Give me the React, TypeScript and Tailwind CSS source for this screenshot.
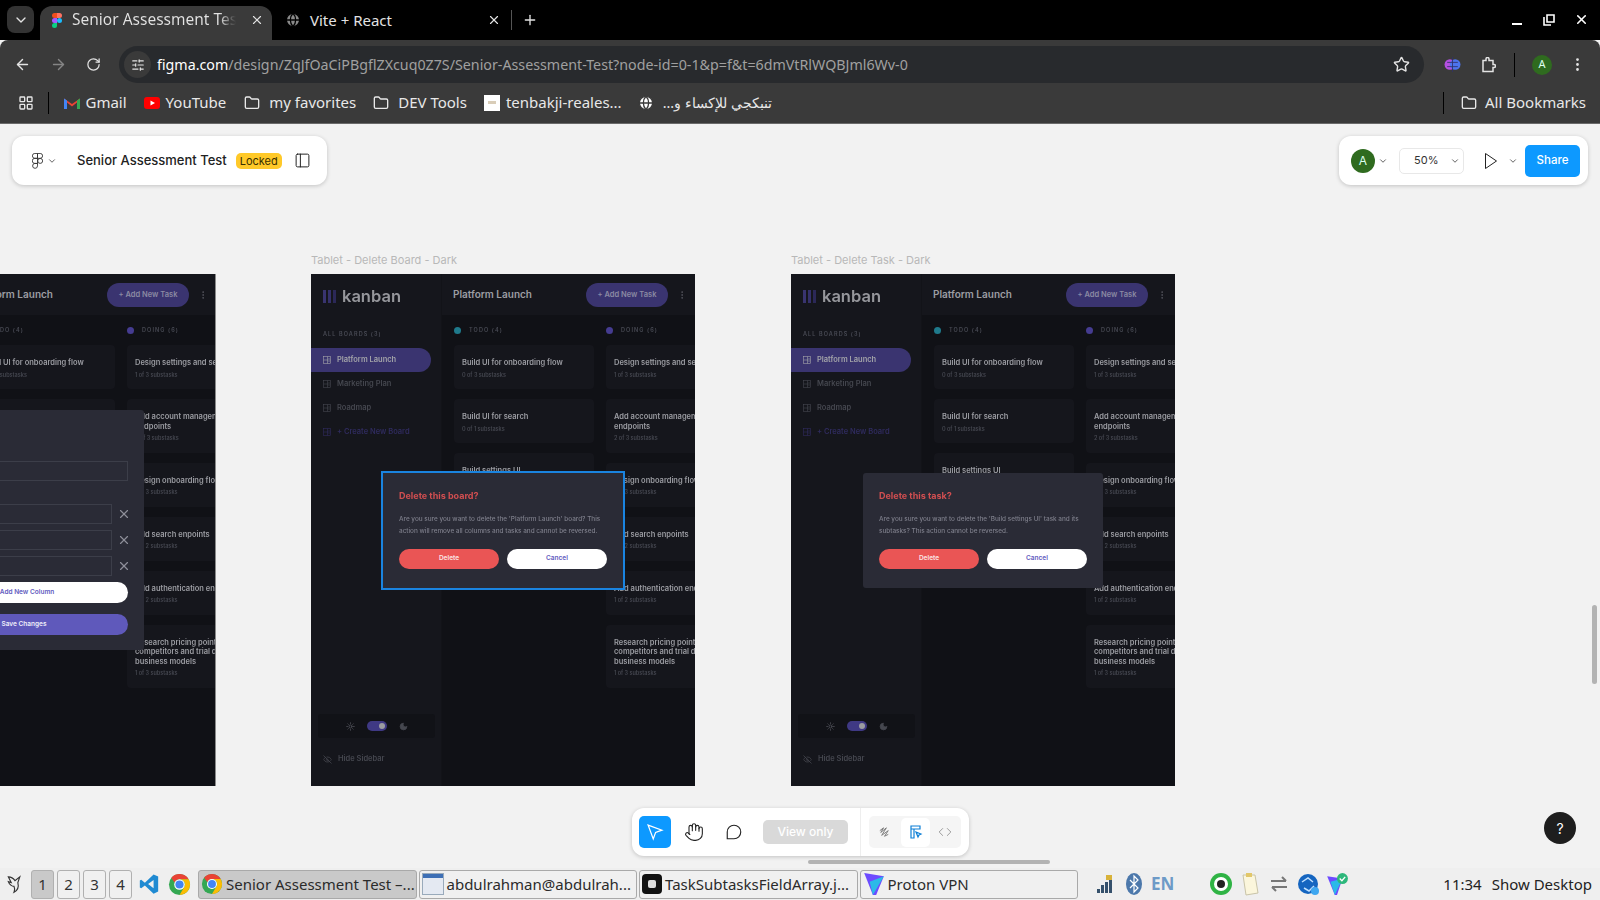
import {
  ArrowLeft,
  ArrowRight,
  ChevronDown,
  Code,
  EllipsisVertical,
  EyeOff,
  Folder,
  Globe,
  Hand,
  LayoutGrid,
  Moon,
  PanelLeft,
  Plus,
  RotateCw,
  SlidersHorizontal,
  Star,
  Sun,
  X,
} from 'lucide-react';

const todoCards = [
  { title: 'Build UI for onboarding flow', sub: '0 of 3 substasks' },
  { title: 'Build UI for search', sub: '0 of 1 substasks' },
  { title: 'Build settings UI', sub: '0 of 2 substasks' },
  { title: 'QA and test all major\nuser journeys', sub: '0 of 2 substasks' },
];

const doingCards = [
  { title: 'Design settings and search pages', sub: '1 of 3 substasks' },
  { title: 'Add account management\nendpoints', sub: '2 of 3 substasks' },
  { title: 'Design onboarding flow', sub: '1 of 3 substasks' },
  { title: 'Add search enpoints', sub: '1 of 2 substasks' },
  { title: 'Add authentication endpoints', sub: '1 of 2 substasks' },
  { title: 'Research pricing points of\ncompetitors and trial different\nbusiness models', sub: '1 of 3 substasks' },
];

function BoardIcon({ className }: { className?: string }) {
  return (
    <svg viewBox="0 0 16 16" fill="none" stroke="currentColor" strokeWidth="1.2" className={className}>
      <rect x="1" y="1" width="14" height="14" />
      <path d="M1 8h14M9 1v14M11 5h2M11 11h2" />
    </svg>
  );
}

function TaskCard({ title, sub }: { title: string; sub: string }) {
  return (
    <div className="w-[140px] shrink-0 rounded-[4px] bg-[#15161c] pl-2 pt-[13px] pb-[10.5px]">
      <p className="whitespace-pre text-[7.5px] leading-[9.5px] font-semibold text-[#9c9da3]">{title}</p>
      <p className="mt-[3px] whitespace-nowrap text-[5.5px] leading-[8px] font-semibold text-[#44464f]">{sub}</p>
    </div>
  );
}

function Column({ dot, label, cards }: { dot: string; label: string; cards: { title: string; sub: string }[] }) {
  return (
    <div className="flex w-[140px] shrink-0 flex-col gap-[10px]">
      <div className="-mb-[10px] flex h-[30px] items-center gap-2">
        <span className={`size-[7px] rounded-full ${dot}`} />
        <span className="text-[5.5px] font-semibold tracking-[0.2em] text-[#494b55]">{label}</span>
      </div>
      {cards.map((c) => (
        <TaskCard key={c.title} title={c.title} sub={c.sub} />
      ))}
    </div>
  );
}

function KanbanFrame({ className, children }: { className: string; children?: React.ReactNode }) {
  return (
    <div className={`absolute top-[150px] flex h-[512px] w-[384px] overflow-hidden bg-[#101116] font-['Inter',sans-serif] ${className}`}>
      <aside className="flex w-[131px] shrink-0 flex-col border-r border-[#121318] bg-[#15161c] blur-[0.25px]">
        <div className="mt-[9px] flex h-[26px] items-center gap-[6px] pl-3">
          <div className="flex gap-[2px]">
            <span className="h-[13px] w-[3px] bg-[#393470]" />
            <span className="h-[13px] w-[3px] bg-[#34306a]" />
            <span className="h-[13px] w-[3px] bg-[#2b2858]" />
          </div>
          <span className="text-[16.5px] font-semibold text-[#96979c]">kanban</span>
        </div>
        <p className="mt-[21px] pl-3 text-[5.5px] leading-[8px] font-semibold tracking-[0.2em] text-[#494b55]">ALL BOARDS (3)</p>
        <div className="mt-[10px] flex flex-col">
          <div className="flex h-6 w-[120px] items-center gap-[6px] rounded-r-full bg-[#3a3470] pl-3 text-[7.5px] font-semibold text-[#a3a4a9]">
            <BoardIcon className="size-2" />
            Platform Launch
          </div>
          <div className="flex h-6 items-center gap-[6px] pl-3 text-[7.5px] font-semibold text-[#45474f]">
            <BoardIcon className="size-2" />
            Marketing Plan
          </div>
          <div className="flex h-6 items-center gap-[6px] pl-3 text-[7.5px] font-semibold text-[#45474f]">
            <BoardIcon className="size-2" />
            Roadmap
          </div>
          <div className="flex h-6 items-center gap-[6px] pl-3 text-[7.5px] font-semibold text-[#2f2b5e]">
            <BoardIcon className="size-2" />
            + Create New Board
          </div>
        </div>
        <div className="mt-auto ml-[7px] flex h-6 w-[117px] items-center justify-center gap-3 rounded-[3px] bg-[#111217]">
          <Sun className="size-[9px] text-[#55575f]" />
          <span className="flex h-[10px] w-5 items-center justify-end rounded-full bg-[#3f3984] pr-[2px]">
            <span className="size-[6px] rounded-full bg-[#9b9ca1]" />
          </span>
          <Moon className="size-[9px] fill-[#45474f] text-[#45474f]" />
        </div>
        <div className="mt-[15px] mb-[21px] flex h-[12px] items-center gap-[6px] pl-3 text-[7.5px] font-semibold text-[#45474f]">
          <EyeOff className="size-[9px]" />
          Hide Sidebar
        </div>
      </aside>
      <div className="flex min-w-0 flex-1 flex-col blur-[0.25px]">
        <header className="flex h-[41px] shrink-0 items-center bg-[#15161c] pl-[11px]">
          <span className="w-[133px] text-[10px] font-semibold text-[#9c9da3]">Platform Launch</span>
          <span className="flex h-6 w-[82px] items-center justify-center rounded-full bg-[#3a3470] text-[7.5px] font-semibold text-[#8b8aa3]">+ Add New Task</span>
          <EllipsisVertical className="ml-[9px] size-[10px] text-[#55575f]" />
        </header>
        <div className="flex gap-3 pl-3">
          <Column dot="bg-[#1f7a8c]" label="TODO (4)" cards={todoCards} />
          <Column dot="bg-[#453c91]" label="DOING (6)" cards={doingCards} />
        </div>
      </div>
      {children}
    </div>
  );
}

function DeleteDialog({ title, lines, selected }: { title: string; lines: string[]; selected?: boolean }) {
  return (
    <div className={`absolute left-[72px] top-[199px] w-[240px] rounded-[3px] bg-[#2a2b36] p-4 pb-[19px] ${selected ? 'rounded-none outline-2 outline-[#1a84e0]' : ''}`}>
      <div className="blur-[0.2px]">
        <p className="text-[9px] leading-[14px] font-bold text-[#d04e50]">{title}</p>
        <div className="mt-[11px] text-[6.4px] leading-[11.5px] font-medium text-[#7e7f8b]">
          {lines.map((l) => (
            <p key={l} className="whitespace-nowrap">{l}</p>
          ))}
        </div>
      </div>
      <div className="mt-[12px] flex gap-2">
        <button className="h-5 w-[100px] rounded-full bg-[#ea5555] text-[6.5px] font-semibold text-[#fbe5e5]">Delete</button>
        <button className="h-5 w-[100px] rounded-full bg-white text-[6.5px] font-semibold text-[#5f5bc0]">Cancel</button>
      </div>
    </div>
  );
}

function EditBoardDialog() {
  return (
    <div className="absolute left-[72px] top-[136px] h-[240px] w-[240px] rounded-[3px] bg-[#2a2b36]">
      <div className="absolute left-4 top-[51px] h-5 w-[208px] border border-[#3c3e49]" />
      {[94, 120, 146].map((t) => (
        <div key={t} className="absolute left-4 flex items-center gap-[5px]" style={{ top: t }}>
          <div className="h-5 w-[192px] border border-[#3c3e49]" />
          <X className="size-[14px] text-[#8d8e99]" strokeWidth={2} />
        </div>
      ))}
      <div className="absolute left-4 top-[172px] flex h-[21px] w-[208px] items-center justify-center rounded-full bg-white text-[6.5px] font-semibold text-[#5f5bc0]">+ Add New Column</div>
      <div className="absolute left-4 top-[204px] flex h-[21px] w-[208px] items-center justify-center rounded-full bg-[#5f59bb] text-[6.5px] font-semibold text-[#eeeefa]">Save Changes</div>
    </div>
  );
}

function ChromeLogo({ className }: { className?: string }) {
  return (
    <svg viewBox="0 0 24 24" className={className}>
      <circle cx="12" cy="12" r="11" fill="#34a853" />
      <path d="M3.4 5.1A11 11 0 0 1 21.5 6.5H12a5.5 5.5 0 0 0-5 3.5z" fill="#ea4335" />
      <path d="M21.5 6.5A11 11 0 0 1 12 23l4.8-8.2A5.5 5.5 0 0 0 12 6.5z" fill="#fbbc04" />
      <circle cx="12" cy="12" r="5.5" fill="#fff" />
      <circle cx="12" cy="12" r="4.3" fill="#4285f4" />
    </svg>
  );
}

function FigmaLogo({ className }: { className?: string }) {
  return (
    <svg viewBox="0 0 12 18" className={className}>
      <path d="M3 18a3 3 0 0 0 3-3v-3H3a3 3 0 0 0 0 6z" fill="#0acf83" />
      <path d="M0 9a3 3 0 0 1 3-3h3v6H3a3 3 0 0 1-3-3z" fill="#a259ff" />
      <path d="M0 3a3 3 0 0 1 3-3h3v6H3a3 3 0 0 1-3-3z" fill="#f24e1e" />
      <path d="M6 0h3a3 3 0 0 1 0 6H6z" fill="#ff7262" />
      <circle cx="9" cy="9" r="3" fill="#1abcfe" />
    </svg>
  );
}

function FigmaOutline({ className }: { className?: string }) {
  return (
    <svg viewBox="0 0 12 18" fill="none" stroke="currentColor" strokeWidth="1" className={className}>
      <path d="M6 .5H3a2.75 2.75 0 0 0 0 5.5h3zM6 .5h3A2.75 2.75 0 0 1 9 6H6zM6 6H3a2.75 2.75 0 0 0 0 5.75h3zM6 11.75H3a2.75 2.75 0 1 0 3 2.75z" />
      <circle cx="9" cy="8.9" r="2.8" />
    </svg>
  );
}

function TaskButton({ icon, label, active }: { icon: React.ReactNode; label: string; active?: boolean }) {
  return (
    <div className={`flex h-[29px] w-[218.5px] shrink-0 items-center gap-[3px] overflow-hidden rounded-[3px] border border-[#a9a9a9] pl-[2px] whitespace-nowrap ${active ? 'bg-[#c9c9c9]' : 'bg-[#f0f0f0]'}`}>
      {icon}
      <span className="text-[15px] text-[#2b2b2b]">{label}</span>
    </div>
  );
}

function Pager({ n, active }: { n: number; active?: boolean }) {
  return (
    <div className={`flex h-[29px] w-[23px] items-center justify-center rounded-[3px] border border-[#b0b0b0] text-[15px] text-[#333] ${active ? 'bg-[#c9c9c9]' : 'bg-[#f0f0f0]'}`}>{n}</div>
  );
}

export default function App() {
  return (
    <div className="flex h-[900px] w-[1600px] flex-col overflow-hidden bg-[#f2f2f2] font-['Noto_Sans',sans-serif]">
      {/* Tab strip */}
      <div className="flex h-10 shrink-0 items-end bg-black text-[#e3e3e3]">
        <div className="mb-[7px] ml-[7px] flex h-[27px] w-[27px] items-center justify-center rounded-lg bg-[#333]">
          <ChevronDown className="size-4" />
        </div>
        <div className="ml-[6px] flex h-[34px] w-[232px] items-center rounded-t-xl bg-[#3a3a3a] pb-[6px] pl-3">
          <FigmaLogo className="h-[15px] w-[10px]" />
          <span className="ml-[10px] w-[164px] overflow-hidden bg-linear-to-r from-[#e3e3e3] from-90% to-[#3a3a3a] bg-clip-text text-[15.5px] whitespace-nowrap text-transparent">Senior Assessment Test</span>
          <X className="ml-[14px] size-[14px]" />
        </div>
        <div className="flex h-[34px] items-center pb-[6px] pl-[13px]">
          <Globe className="size-[16px] fill-[#8a8a8a] text-black" />
          <span className="ml-[9px] w-[177px] text-[15px]">Vite + React</span>
          <X className="size-[14px]" />
          <span className="ml-[10px] h-[20px] w-px bg-[#555]" />
          <Plus className="ml-[10px] size-4" />
        </div>
        <div className="mb-[13px] ml-auto flex items-center pr-[11px] text-white">
          <span className="mt-2 h-[2px] w-[10px] bg-white" />
          <svg viewBox="0 0 12 12" fill="none" stroke="currentColor" strokeWidth="1.6" className="ml-[21px] size-3">
            <path d="M1 3v8h7M4 1h7v7H4z" />
          </svg>
          <X className="ml-[19px] size-[15px]" strokeWidth={2.5} />
        </div>
      </div>

      {/* Address bar */}
      <div className="flex h-[43px] shrink-0 items-center rounded-t-lg bg-[#3a3a3a] pt-[6px] pl-[14px] text-[#e3e3e3]">
        <ArrowLeft className="size-[17px]" />
        <ArrowRight className="ml-[19px] size-[17px] text-[#858585]" />
        <RotateCw className="ml-[19px] size-[15px]" />
        <div className="ml-[18px] flex h-[37px] w-[1305px] items-center rounded-full bg-[#282a2d] pl-[5px] text-[14.25px]">
          <span className="flex size-[27px] items-center justify-center rounded-full bg-[#3a3a3a]">
            <SlidersHorizontal className="size-[14px]" />
          </span>
          <span className="ml-[6px] text-white">figma.com</span>
          <span className="text-[#a0a0a0]">/design/ZqJfOaCiPBgflZXcuq0Z7S/Senior-Assessment-Test?node-id=0-1&amp;p=f&amp;t=6dmVtRlWQBJml6Wv-0</span>
          <Star className="ml-auto mr-[14px] size-[17px]" />
        </div>
        <svg viewBox="0 0 16 16" className="ml-[20px] size-[17px]">
          <circle cx="5.5" cy="8" r="5" fill="#b44fe0" />
          <circle cx="10.5" cy="8" r="5" fill="#4d74ee" />
          <path d="M8 1v14M3 6h10M3 10h10" stroke="#2f2f6a" strokeWidth="0.8" />
        </svg>
        <svg viewBox="0 0 16 16" fill="none" stroke="currentColor" strokeWidth="1.5" className="ml-[19px] size-[16px]">
          <path d="M3 3.5h3V2a1.5 1.5 0 0 1 3 0v1.5h4v4h1a1 1 0 0 1 0 3h-1v4H3z" />
        </svg>
        <span className="ml-[18px] h-[24px] w-px bg-black" />
        <span className="ml-[17px] flex size-5 items-center justify-center rounded-full bg-[#2f6b1f] text-[11px] text-[#dfe]">A</span>
        <EllipsisVertical className="ml-[17px] size-[17px]" />
      </div>

      {/* Bookmarks */}
      <div className="flex h-[41px] shrink-0 items-center border-b border-[#6a6a6a] bg-[#3a3a3a] pb-[1px] text-[15px] text-[#e8e8e8]">
        <LayoutGrid className="ml-[18px] size-[16px]" />
        <span className="ml-[14px] h-[22px] w-px bg-black" />
        <svg viewBox="0 0 16 12" className="ml-[14.5px] h-3 w-4">
          <path d="M0 12V1.5L8 7l8-5.5V12h-3V5.5L8 9.5 3 5.5V12z" fill="#ea4335" />
          <path d="M0 12V1.5l3 2V12z" fill="#4285f4" />
          <path d="M13 12V3.5l3-2V12z" fill="#34a853" />
        </svg>
        <span className="ml-[6px]">Gmail</span>
        <svg viewBox="0 0 16 12" className="ml-[17px] h-3 w-4">
          <rect width="16" height="12" rx="3" fill="#f00" />
          <path d="M6.5 3.5v5L11 6z" fill="#fff" />
        </svg>
        <span className="ml-[6px]">YouTube</span>
        <Folder className="ml-[18px] size-4" />
        <span className="ml-[9px]">my favorites</span>
        <Folder className="ml-[17px] size-4" />
        <span className="ml-[9px]">DEV Tools</span>
        <span className="ml-[17px] flex size-4 items-center justify-center bg-white">
          <span className="h-[3px] w-2 bg-[#d9cdb8]" />
        </span>
        <span className="ml-[6px]">tenbakji-reales...</span>
        <Globe className="ml-[16px] size-4 fill-white text-[#3a3a3a]" />
        <span dir="rtl" className="ml-[9px] text-[14.3px]">تنبكجي للإكساء و...</span>
        <span className="ml-auto h-[22px] w-px bg-black" />
        <Folder className="ml-[17px] size-4" />
        <span className="ml-[8px] mr-[14px]">All Bookmarks</span>
      </div>

      {/* Figma canvas */}
      <main className="relative flex-1 bg-[#f2f2f2] font-['Inter',sans-serif]">
        <KanbanFrame className="left-[-168px] border-r border-[#8a8a8a]">
          <EditBoardDialog />
        </KanbanFrame>

        <p className="absolute left-[311px] top-[129px] text-[11px] leading-[14px] text-[#b8b8b8]">Tablet - Delete Board - Dark</p>
        <KanbanFrame className="left-[311px]">
          <DeleteDialog
            selected
            title="Delete this board?"
            lines={["Are you sure you want to delete the 'Platform Launch' board? This", 'action will remove all columns and tasks and cannot be reversed.']}
          />
        </KanbanFrame>

        <p className="absolute left-[791px] top-[129px] text-[11px] leading-[14px] text-[#b8b8b8]">Tablet - Delete Task - Dark</p>
        <KanbanFrame className="left-[791px]">
          <DeleteDialog
            title="Delete this task?"
            lines={["Are you sure you want to delete the 'Build settings UI' task and its", 'subtasks? This action cannot be reversed.']}
          />
        </KanbanFrame>

        {/* File panel */}
        <div className="absolute left-3 top-3 flex h-[49px] w-[315px] items-center rounded-xl bg-white pl-[20px] shadow-[0_1px_4px_rgba(0,0,0,0.2)]">
          <FigmaOutline className="h-4 w-[11px] text-[#333]" />
          <ChevronDown className="ml-[4px] size-[10px] text-[#444]" />
          <span className="ml-[20px] text-[13px] font-medium text-[#222]">Senior Assessment Test</span>
          <span className="ml-[9px] rounded-[5px] bg-[#ffc929] px-[4px] text-[11px] leading-[16px] text-[#3a3000]">Locked</span>
          <PanelLeft className="ml-[12px] size-[17px] text-[#222]" strokeWidth={1.4} />
        </div>

        {/* Share panel */}
        <div className="absolute right-3 top-3 flex h-[49px] w-[249px] items-center rounded-xl bg-white pl-3 shadow-[0_1px_4px_rgba(0,0,0,0.2)]">
          <span className="flex size-6 items-center justify-center rounded-full bg-[#2f6b1f] text-[12px] text-[#dfe]">A</span>
          <ChevronDown className="ml-[3px] size-[10px] text-[#444]" />
          <div className="ml-[11px] flex h-[26px] w-[65px] items-center justify-between rounded-[5px] border border-[#e8e8e8] pl-[14px] pr-[3px] text-[11px] text-[#333]">
            50%
            <ChevronDown className="size-[10px] text-[#444]" />
          </div>
          <svg viewBox="0 0 14 18" fill="none" stroke="#222" strokeWidth="1" className="ml-[20px] h-[18px] w-[14px]">
            <path d="M1.5 1.5l11 7.5-11 7.5z" strokeLinejoin="round" />
          </svg>
          <ChevronDown className="ml-[10px] size-[10px] text-[#444]" />
          <div className="ml-[7px] flex h-8 w-[55px] items-center justify-center rounded-[5px] bg-[#0d99ff] text-[11.5px] font-medium text-white">Share</div>
        </div>

        {/* Bottom tools */}
        <div className="absolute left-[632px] top-[684px] flex h-12 w-[337px] items-center rounded-xl bg-white pl-[7px] shadow-[0_1px_4px_rgba(0,0,0,0.2)]">
          <span className="flex size-8 items-center justify-center rounded-[5px] bg-[#0d99ff]">
            <svg viewBox="0 0 16 16" fill="none" stroke="white" strokeWidth="1" className="size-5">
              <path d="M2.5 2.5l11 4-5 1.8L6.6 13.5z" />
            </svg>
          </span>
          <Hand className="ml-[13px] size-[20px] text-[#222]" strokeWidth={1.3} />
          <svg viewBox="0 0 16 16" fill="none" stroke="#222" strokeWidth="1" className="ml-[21px] size-[18px]">
            <path d="M8 2a6 6 0 0 1 0 12H2V8a6 6 0 0 1 6-6z" />
          </svg>
          <span className="ml-[20px] flex h-6 w-[85px] items-center justify-center rounded-[5px] bg-[#d9d9d9] text-[12px] font-medium text-white">View only</span>
          <span className="ml-3 h-12 w-px bg-[#eee]" />
          <div className="ml-2 flex h-8 w-[92px] items-center rounded-[5px] bg-[#f5f5f5] pl-2">
            <svg viewBox="0 0 16 16" fill="none" stroke="#777" strokeWidth="1" className="size-[15px]">
              <path d="M3 6l4-3-3 5 6-5-5 8 7-5-4 6 4-2" />
            </svg>
            <span className="ml-[9px] flex size-[29px] items-center justify-center rounded-[5px] bg-white">
              <svg viewBox="0 0 16 16" fill="none" stroke="#0d7fd6" strokeWidth="1.2" className="size-[16px]">
                <path d="M3 2h9v3H6v9H3zM3 5h3M8 8l5 2-2 1-1 2z" />
              </svg>
            </span>
            <Code className="ml-[8px] size-[14px] text-[#777]" strokeWidth={1.2} />
          </div>
        </div>

        <div className="absolute left-[1544px] top-[688px] flex size-8 items-center justify-center rounded-full bg-[#1e1e1e] text-[14px] text-white">?</div>
        <div className="absolute left-[808px] top-[736px] h-1 w-[242px] rounded-full bg-[#b3b3b3]" />
        <div className="absolute left-[1592px] top-[481px] h-[79px] w-[5px] rounded-full bg-[#b3b3b3]" />
      </main>

      {/* Desktop panel */}
      <footer className="flex h-8 shrink-0 items-center gap-[3px] bg-[#efefef] pl-[5px]">
        <svg viewBox="0 0 20 22" fill="none" stroke="#333" strokeWidth="1.2" className="mr-[3px] h-[21px] w-[20px]">
          <path d="M3 3c3 0 5 1 7 4l5-4-2 6c1 4 0 8-4 10 1-2 1-4 0-6-2 0-5-2-6-5l3 1C5 7 4 5 3 3z" />
        </svg>
        <Pager n={1} active />
        <Pager n={2} />
        <Pager n={3} />
        <Pager n={4} />
        <svg viewBox="0 0 24 24" className="ml-[3px] size-[22px]">
          <path d="M17 1.5l5 2.4v16.2l-5 2.4L7.5 13.5 3.5 16.6 2 15.8V8.2l1.5-.8 4 3.1zM17 7.5L11 12l6 4.5z" fill="#1f8ad2" />
        </svg>
        <ChromeLogo className="ml-[5px] size-[23px]" />
        <div className="ml-[4px] flex gap-[2px]">
          <TaskButton active icon={<ChromeLogo className="size-[22px] shrink-0" />} label="Senior Assessment Test –..." />
          <TaskButton
            icon={
              <span className="flex h-[22px] w-[22px] shrink-0 flex-col border border-[#9ab]">
                <span className="h-1 bg-[#3d6fb5]" />
                <span className="flex-1 bg-[#e4e9f2]" />
              </span>
            }
            label="abdulrahman@abdulrah..."
          />
          <TaskButton
            icon={
              <span className="flex size-[20px] shrink-0 items-center justify-center rounded-[4px] bg-[#111]">
                <span className="size-2 rounded-[2px] bg-[#ddd]" />
              </span>
            }
            label="TaskSubtasksFieldArray.j..."
          />
          <TaskButton
            icon={
              <svg viewBox="0 0 20 22" className="h-[24px] w-[22px] shrink-0">
                <path d="M1 1l18 3-7 17h-3z" fill="#6d4aff" />
                <path d="M9 21L19 4 6 9z" fill="#2bb9e8" />
              </svg>
            }
            label="Proton VPN"
          />
        </div>
        <svg viewBox="0 0 18 20" className="ml-[15px] h-5 w-[18px]">
          <path d="M1 19v-4h3v4zM5 19v-8h3v8zM9 19V8h3v11zM13 19V5h3v14z" fill="#35506b" />
          <rect x="10" y="1" width="6" height="5" fill="#d8b23a" />
        </svg>
        <svg viewBox="0 0 16 22" className="ml-[9px] h-[22px] w-4">
          <ellipse cx="8" cy="11" rx="8" ry="11" fill="#4c78ab" />
          <path d="M4 7l8 8-4 4V3l4 4-8 8" fill="none" stroke="#fff" strokeWidth="1.2" />
        </svg>
        <span className="ml-[6px] text-[17px] font-bold text-[#6d9ac7]">EN</span>
        <svg viewBox="0 0 24 24" className="ml-[32px] size-[24px]">
          <circle cx="12" cy="12" r="11" fill="#2fb344" />
          <circle cx="12" cy="12" r="7" fill="#fff" />
          <circle cx="12" cy="12" r="4" fill="#222" />
        </svg>
        <svg viewBox="0 0 20 24" className="ml-[4px] h-[24px] w-5">
          <path d="M3 3h12l3 18-12 2z" fill="#fbf6dc" stroke="#c9c4a8" />
          <rect x="6" y="1" width="6" height="4" fill="#e2c76a" />
        </svg>
        <svg viewBox="0 0 20 20" className="ml-[6px] size-5" fill="none" stroke="#777" strokeWidth="2">
          <path d="M2 7h15M13 3l4 4M18 13H3M7 17l-4-4" />
        </svg>
        <svg viewBox="0 0 24 24" className="ml-[5px] size-[24px]">
          <circle cx="11" cy="12" r="10" fill="#1565c0" />
          <path d="M5 10l6-4 5 4M7 16l5 3 5-5" fill="none" stroke="#bfe0ff" strokeWidth="1.5" />
          <circle cx="18" cy="19" r="4" fill="#3fa7f0" />
        </svg>
        <svg viewBox="0 0 22 22" className="ml-[1px] size-[24px]">
          <path d="M2 4l14 2-5 15h-2z" fill="#6d4aff" />
          <path d="M9 21l7-15-11 3z" fill="#2bb9e8" />
          <circle cx="16" cy="6" r="5" fill="#2db77b" />
          <path d="M13.5 6l2 2 3-3.5" fill="none" stroke="#fff" strokeWidth="1.2" />
        </svg>
        <span className="ml-auto text-[15px] whitespace-nowrap text-[#222]">11:34</span>
        <span className="ml-[7px] mr-[8px] text-[15px] whitespace-nowrap text-[#222]">Show Desktop</span>
      </footer>
    </div>
  );
}
